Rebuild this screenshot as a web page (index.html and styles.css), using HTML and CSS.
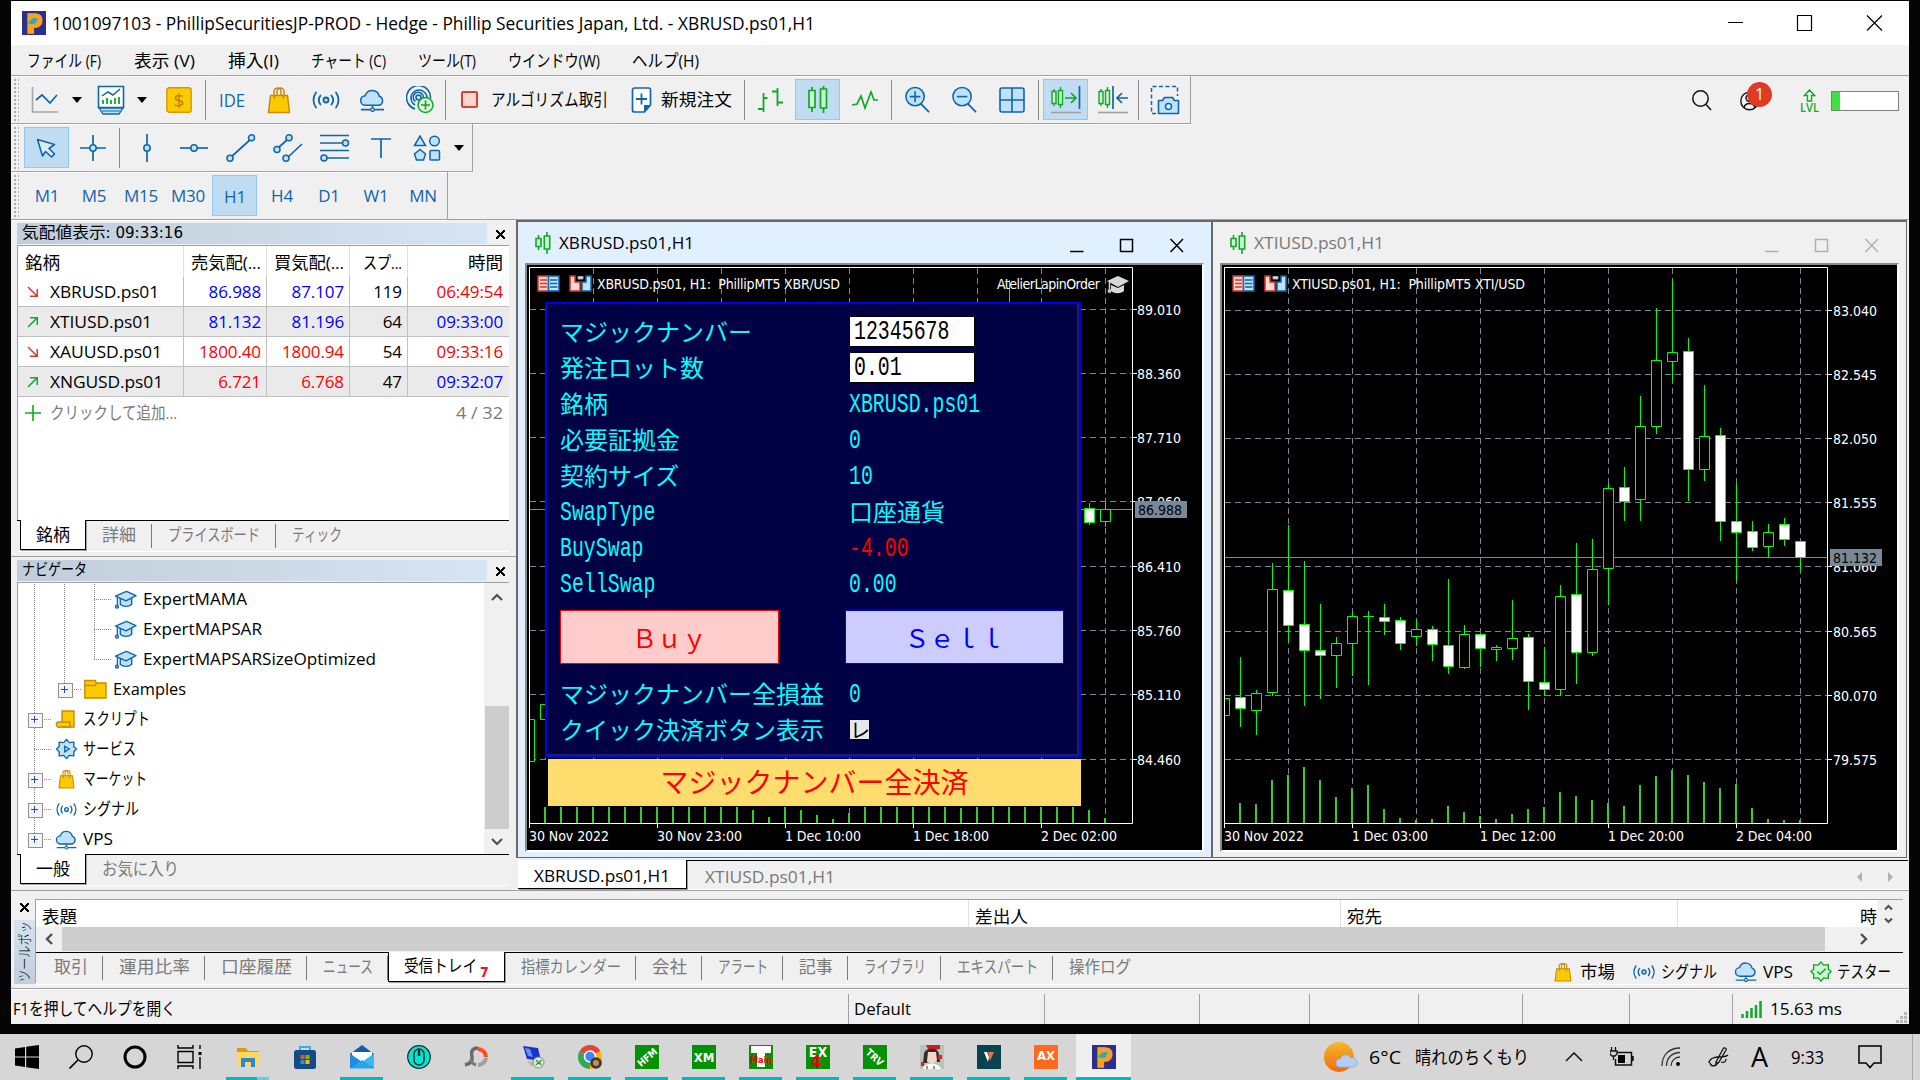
FILE: index.html
```html
<!DOCTYPE html>
<html lang="ja">
<head>
<meta charset="utf-8">
<title>1001097103 - PhillipSecuritiesJP-PROD</title>
<link rel="stylesheet" href="styles.css">
</head>
<body>
<svg class="defs" width="0" height="0" aria-hidden="true">
  <symbol id="bag" viewBox="0 0 24 28"><path d="M7 12V5.500a3.500 3.500 0 0 1 7 0V12M10 12V5.500a3.500 3.500 0 0 1 7 0V12" fill="none" stroke="#c98a00" stroke-width="1.500"/><path d="M3.500 9.500h17l2 17h-21z" fill="#fbcb00" stroke="#c98a00" stroke-width="1.500" stroke-linejoin="round"/><path d="M7.500 9v4M16.500 9v4" stroke="#c98a00" stroke-width="1.500"/></symbol>
  <symbol id="signal" viewBox="0 0 28 20"><g fill="none" stroke="#0f66a8" stroke-width="1.800" stroke-linecap="round"><circle cx="14" cy="10" r="2.500" fill="#bfe3ff"/><path d="M8.500 5.500a7.500 7.500 0 0 0 0 9M19.500 5.500a7.500 7.500 0 0 1 0 9M4 2.500a12.500 12.500 0 0 0 0 15M24 2.500a12.500 12.500 0 0 1 0 15"/></g></symbol>
  <symbol id="cloud" viewBox="0 0 28 24"><path d="M7 17.500a5 5 0 0 1-.5-10A7.500 7.500 0 0 1 21 8a5 5 0 0 1 0 9.500z" fill="#bfe3ff" stroke="#0f66a8" stroke-width="1.600"/><path d="M14 17.500v3M2 22h24" stroke="#0f66a8" stroke-width="1.600"/><circle cx="14" cy="22" r="1.800" fill="#bfe3ff" stroke="#0f66a8" stroke-width="1.200"/></symbol>
  <symbol id="cap" viewBox="0 0 24 20"><g fill="#bfe3ff" stroke="#0f66a8" stroke-width="1.500" stroke-linejoin="round"><path d="M6.500 8v7c3 3 9 3 12 0V8z"/><path d="M1.500 6.500 13 1.500l10 4.500-10.500 5.500z"/><path d="M3.500 7.500v9" fill="none"/><circle cx="3" cy="17.500" r="1.500"/></g></symbol>
  <symbol id="candles" viewBox="0 0 18 22"><path d="M4.500 3v15M13 0v22" stroke="#10a828" stroke-width="1.600"/><path d="M2 6.500h5v8H2zM10.300 4h5.400v13h-5.400z" fill="#cdf5cf" stroke="#10a828" stroke-width="1.600"/></symbol>
  <symbol id="gear" viewBox="0 0 24 24"><path d="M12 1.500 15 5l5-.5L20 9.500 23 12l-3 3v4.500l-5-.5-3 3.500L9 19l-5 .5V15l-3-3 3-2.500v-5L9 5z" stroke-width="1.500" stroke-linejoin="round"/></symbol>
  <symbol id="depth" viewBox="0 0 23 17"><path d="M1 1h10.500v15H1z" fill="#ffd9d4" stroke="#d8322a" stroke-width="1.500"/><path d="M11.500 1H22v15H11.500z" fill="#bfe3ff" stroke="#0f66a8" stroke-width="1.500"/><path d="M3 5h7M3 8.500h7M3 12h7" stroke="#d8322a" stroke-width="1.500"/><path d="M13 5h7.500M13 8.500h7.500M13 12h7.500" stroke="#0f66a8" stroke-width="1.500"/></symbol>
  <symbol id="oneclick" viewBox="0 0 23 17"><path d="M1 1h5v6h5v9H1z" fill="#ffd9d4" stroke="#d8322a" stroke-width="1.500"/><path d="M22 1h-5v6h-4v9h9z" fill="#bfe3ff" stroke="#0f66a8" stroke-width="1.500"/><path d="M9 1.500h5v2.500H9z" fill="#ddd" stroke="#aaa"/></symbol>
  <symbol id="pp" viewBox="0 0 24 24"><path d="M0 0h24v24H0z" fill="#2b2d8f"/><text x="4" y="21.500" font-family="Open Sans" font-weight="800" font-size="26" fill="#f6a31c" stroke="#f6a31c" stroke-width="1.500">P</text><path d="m5.500 12 5-4.500 4-.5 1 1-2 4.500-4 .5z" fill="#2aa7c9"/></symbol>
  <symbol id="lens" viewBox="0 0 28 28"><path d="m17 18 9 9" stroke="#0f66a8" stroke-width="1.800"/><circle cx="11.500" cy="11" r="9.500" fill="#bfe3ff" stroke="#0f66a8" stroke-width="1.600"/></symbol>
</svg>

<div class="window">
  <header class="titlebar">
    <svg class="logo" width="24" height="24"><use href="#pp"/></svg>
    <span data-w="763">1001097103 - PhillipSecuritiesJP-PROD - Hedge - Phillip Securities Japan, Ltd. - XBRUSD.ps01,H1</span>
    <svg class="winbtns" width="160" height="18" viewBox="0 0 160 18"><path d="M1 8.500h15M70.500 1.500h14v15h-14zM140 1.500l15 15M155 1.500l-15 15" fill="none" stroke="#000" stroke-width="1.200"/></svg>
  </header>

  <nav class="menubar">
    <span data-w="74">ファイル (F)</span><span data-w="61">表示 (V)</span><span data-w="51">挿入(I)</span><span data-w="75">チャート (C)</span><span data-w="58">ツール(T)</span><span data-w="92">ウインドウ(W)</span><span data-w="67">ヘルプ(H)</span>
  </nav>

  <div class="toolrow">
    <div class="toolbar main-tools">
      <i class="grip"></i>
      <svg width="28" height="28" viewBox="0 0 28 28"><path d="M1.500 1v25H27" fill="none" stroke="#a6a6a6" stroke-width="1.600"/><path d="m5 14 6-5 8 8 7-8" fill="none" stroke="#0f66a8" stroke-width="1.700"/></svg>
      <i class="drop"></i>
      <svg width="28" height="30" viewBox="0 0 28 30"><path d="M1.500 1.500h25v21h-25z" fill="#fff" stroke="#0f66a8" stroke-width="1.600"/><path d="M2 23h24l-4 6H6z" fill="#bfe3ff" stroke="#0f66a8" stroke-width="1.300"/><path d="M5 26h18" stroke="#0f66a8"/><path d="m5 11 6-4 5 3 7-6" fill="none" stroke="#0f66a8" stroke-width="1.500"/><path d="M6 15v4M10 13v6M14 15v4M18 13v6M22 12v7" stroke="#10a828" stroke-width="1.800"/></svg>
      <i class="drop near"></i>
      <svg width="26" height="26" viewBox="0 0 26 26"><rect x=".8" y=".8" width="24.400" height="24.400" rx="2.500" fill="#fbcb00" stroke="#d39a00" stroke-width="1.400"/><text x="13" y="20" text-anchor="middle" font-family="Open Sans" font-size="19" fill="#bd7b00">$</text></svg>
      <i class="sep"></i>
      <span class="tool-text" data-w="26">IDE</span>
      <svg width="24" height="28"><use href="#bag"/></svg>
      <svg width="28" height="20"><use href="#signal"/></svg>
      <svg width="27" height="24"><use href="#cloud"/></svg>
      <svg width="28" height="28" viewBox="0 0 28 28"><g fill="none" stroke="#0f66a8" stroke-width="1.600"><circle cx="12.500" cy="11.500" r="2.500" fill="#bfe3ff"/><path d="M9 23a12 12 0 1 1 15.500-10.500M9 19a8 8 0 1 1 12-7M9.500 15.500A5 5 0 1 1 17 13"/></g><circle cx="19.500" cy="19" r="7.500" fill="#dcf7dc" stroke="#10a828" stroke-width="1.500"/><path d="M15 19h9M19.500 14.500v9" stroke="#10a828" stroke-width="1.700"/></svg>
      <i class="sep"></i>
      <span class="labelled algo"><i class="stop"></i><span data-w="117">アルゴリズム取引</span></span>
      <span class="labelled"><svg width="21" height="26" viewBox="0 0 21 26"><path d="M3.500 1h14a2 2 0 0 1 2 2v15l-6 7h-10a2 2 0 0 1-2-2V3a2 2 0 0 1 2-2z" fill="#fff" stroke="#0f66a8" stroke-width="1.700"/><path d="M13 25v-7h7z" fill="#0f66a8"/><path d="M5 12h11M10.500 6.500v11" stroke="#0f66a8" stroke-width="1.800"/></svg><span data-w="71">新規注文</span></span>
      <i class="sep"></i>
      <svg width="26" height="26" viewBox="0 0 26 26"><path d="M5.500 6v19M0 22h5M5.500 11h4M19.500 1v18M14 4.500h5M20 15.500h5" stroke="#10a828" stroke-width="1.800" fill="none"/></svg>
      <span class="tbtn on"><svg width="22" height="27" viewBox="0 0 22 27"><path d="M5 1v25M16.500 0v27" stroke="#10a828" stroke-width="1.800"/><path d="M2 4.500h6v17H2zM13.500 3h6v19h-6z" fill="#cdf5cf" stroke="#10a828" stroke-width="1.700"/></svg></span>
      <svg width="26" height="20" viewBox="0 0 26 20"><path d="m0 15 5-1 4-8 4 12 6-16 3 8h4" fill="none" stroke="#10a828" stroke-width="1.700"/></svg>
      <i class="sep"></i>
      <svg width="27" height="27" viewBox="0 0 28 28"><use href="#lens"/><path d="M6 11h11M11.500 5.500v11" stroke="#0f66a8" stroke-width="1.700"/></svg>
      <svg width="27" height="27" viewBox="0 0 28 28"><use href="#lens"/><path d="M6 11h11" stroke="#0f66a8" stroke-width="1.700"/></svg>
      <svg width="26" height="26" viewBox="0 0 26 26"><rect x="1" y="1" width="24" height="24" rx="2" fill="#bfe3ff" stroke="#0f66a8" stroke-width="1.600"/><path d="M1 13h24M13 1v24" stroke="#0f66a8" stroke-width="1.600"/></svg>
      <i class="sep"></i>
      <span class="tbtn on"><svg width="30" height="28" viewBox="0 0 30 28"><path d="M3 3v17M9.500 1v21" stroke="#10a828" stroke-width="1.400"/><path d="M1 5.500h4v12H1zM7.500 4.500h4v14h-4z" fill="#cdf5cf" stroke="#10a828" stroke-width="1.400"/><path d="M14 12h11M20 7l5 5-5 5" fill="none" stroke="#10a828" stroke-width="1.700"/><path d="M28.500 0v23" stroke="#0f66a8" stroke-width="1.700"/><path d="M0 26.500h30" stroke="#a0a0a0" stroke-width="1.600"/></svg></span>
      <svg width="30" height="28" viewBox="0 0 30 28"><path d="M3 3v17M9.500 1v21" stroke="#10a828" stroke-width="1.400"/><path d="M1 5.500h4v12H1zM7.500 4.500h4v14h-4z" fill="#cdf5cf" stroke="#10a828" stroke-width="1.400"/><path d="M15 0v23M30 12H19M24 7l-5 5 5 5" fill="none" stroke="#0f66a8" stroke-width="1.700"/><path d="M0 26.500h30" stroke="#a0a0a0" stroke-width="1.600"/></svg>
      <i class="sep"></i>
      <svg width="30" height="30" viewBox="0 0 30 30"><path d="M6 28.500H1.500v-27h26V11" fill="none" stroke="#0f66a8" stroke-width="1.500" stroke-dasharray="4 2.500"/><path d="M8.500 15.500h4l2-3h8l2 3h4v13h-20z" fill="#bfe3ff" stroke="#0f66a8" stroke-width="1.600" stroke-linejoin="round"/><circle cx="18.500" cy="21.500" r="3" fill="#dff" stroke="#0f66a8" stroke-width="1.500"/></svg>
    </div>
    <div class="account">
      <svg width="20" height="21" viewBox="0 0 20 21"><circle cx="8.500" cy="8.500" r="7.700" fill="none" stroke="#111" stroke-width="1.500"/><path d="m14 14.500 5 5.500" stroke="#111" stroke-width="1.500"/></svg>
      <div class="profile">
        <svg width="19" height="20" viewBox="0 0 19 20"><g fill="none" stroke="#111" stroke-width="1.400"><circle cx="9.500" cy="10" r="8.700"/><circle cx="9.500" cy="7" r="3.500"/><path d="M4 17c1-6 10-6 11 0"/></g></svg>
        <b class="badge">1</b>
      </div>
      <div class="lvl"><svg width="13" height="13" viewBox="0 0 12 13"><path d="M4 12V6.500H1L6 1l5 5.500H8V12z" fill="#fff" stroke="#10a828" stroke-width="1.500"/></svg><span data-w="19">LVL</span></div>
      <div class="meter"></div>
    </div>
  </div>

  <div class="toolrow">
    <div class="toolbar draw-tools">
      <i class="grip"></i>
      <span class="tbtn on"><svg width="20" height="20" viewBox="0 0 20 20"><path d="m1.500 1.500 17 5-5.500 4 5.500 5.500-3 3-6-5.500-3 4.500z" fill="#d8edff" stroke="#0f66a8" stroke-width="1.600" stroke-linejoin="round"/></svg></span>
      <svg width="26" height="26" viewBox="0 0 26 26"><path d="M13 0v26M0 13h26" stroke="#0f66a8" stroke-width="1.700"/><circle cx="13" cy="13" r="3.200" fill="#bfe3ff" stroke="#0f66a8" stroke-width="1.500"/></svg>
      <i class="sep"></i>
      <svg width="26" height="28" viewBox="0 0 26 28"><path d="M13 0v28" stroke="#0f66a8" stroke-width="1.700"/><circle cx="13" cy="14" r="3.200" fill="#bfe3ff" stroke="#0f66a8" stroke-width="1.500"/></svg>
      <svg width="28" height="26" viewBox="0 0 28 26"><path d="M0 13h28" stroke="#0f66a8" stroke-width="1.700"/><circle cx="14" cy="13" r="3.200" fill="#bfe3ff" stroke="#0f66a8" stroke-width="1.500"/></svg>
      <svg width="30" height="28" viewBox="0 0 30 28"><path d="m4 24 22-20" stroke="#0f66a8" stroke-width="1.700"/><g fill="#bfe3ff" stroke="#0f66a8" stroke-width="1.500"><circle cx="4" cy="24.300" r="3"/><circle cx="25.500" cy="3.800" r="3"/></g></svg>
      <svg width="30" height="28" viewBox="0 0 30 28"><path d="M4 15 16 4M13 25l16-15" stroke="#0f66a8" stroke-width="1.700"/><g fill="#bfe3ff" stroke="#0f66a8" stroke-width="1.500"><circle cx="4" cy="15.500" r="3"/><circle cx="16" cy="3.800" r="3"/><circle cx="13" cy="24.300" r="3"/></g></svg>
      <svg width="30" height="28" viewBox="0 0 30 28"><path d="M0 1.500h29M0 9h24M0 16.500h29M5 24h24" stroke="#0f66a8" stroke-width="1.700"/><g fill="#bfe3ff" stroke="#0f66a8" stroke-width="1.500"><circle cx="25.500" cy="9" r="3"/><circle cx="4" cy="24" r="3"/></g></svg>
      <svg width="20" height="20" viewBox="0 0 20 20"><path d="M0 1h20M10 1v19" stroke="#0f66a8" stroke-width="1.700"/></svg>
      <svg width="28" height="26" viewBox="0 0 28 26"><g fill="#bfe3ff" stroke="#0f66a8" stroke-width="1.500"><path d="M1.500 10.500 7 1l5.500 9.500zM7 14.500l5.500 4.500-2 6h-7l-2-6z"/><circle cx="21.500" cy="6" r="4.800"/><rect x="17" y="15.500" width="9.500" height="9.500" rx="1"/></g></svg>
      <i class="drop"></i>
    </div>
  </div>

  <div class="toolrow">
    <div class="toolbar periods">
      <i class="grip"></i>
      <span>M1</span><span>M5</span><span>M15</span><span>M30</span><span class="on">H1</span><span>H4</span><span>D1</span><span>W1</span><span>MN</span>
    </div>
  </div>

  <main class="work">
    <aside class="side">
      <section class="dock">
        <div class="dock-head"><div class="dock-title"><span data-w="161">気配値表示: 09:33:16</span></div><b class="x"></b></div>
        <div class="dock-body watch">
          <div class="wrow whead"><span><em data-w="35">銘柄</em></span><span><em data-w="70">売気配(...</em></span><span><em data-w="70">買気配(...</em></span><span><em data-w="39">スプ...</em></span><span><em data-w="35">時間</em></span></div>
          <div class="wrow"><span><svg width="12" height="12" viewBox="0 0 12 12"><path d="m1 1 9 9M3 10.300h7.300V3" fill="none" stroke="#d04030" stroke-width="1.500"/></svg><em data-w="109">XBRUSD.ps01</em></span><span class="blue">86.988</span><span class="blue">87.107</span><span>119</span><span class="red">06:49:54</span></div>
          <div class="wrow alt"><span><svg width="12" height="12" viewBox="0 0 12 12"><path d="m1 11 9-9M3 1.700h7.300V9" fill="none" stroke="#10a828" stroke-width="1.500"/></svg><em data-w="102">XTIUSD.ps01</em></span><span class="blue">81.132</span><span class="blue">81.196</span><span>64</span><span class="blue">09:33:00</span></div>
          <div class="wrow"><span><svg width="12" height="12" viewBox="0 0 12 12"><path d="m1 1 9 9M3 10.300h7.300V3" fill="none" stroke="#d04030" stroke-width="1.500"/></svg><em data-w="112">XAUUSD.ps01</em></span><span class="red">1800.40</span><span class="red">1800.94</span><span>54</span><span class="red">09:33:16</span></div>
          <div class="wrow alt"><span><svg width="12" height="12" viewBox="0 0 12 12"><path d="m1 11 9-9M3 1.700h7.300V9" fill="none" stroke="#10a828" stroke-width="1.500"/></svg><em data-w="113">XNGUSD.ps01</em></span><span class="red">6.721</span><span class="red">6.768</span><span>47</span><span class="blue">09:32:07</span></div>
          <div class="wadd"><svg width="16" height="16" viewBox="0 0 16 16"><path d="M0 8h16M8 0v16" stroke="#10a828" stroke-width="1.600"/></svg><em data-w="127">クリックして追加...</em><b data-w="47">4 / 32</b></div>
        </div>
        <div class="tabs">
          <span class="active"><em data-w="34">銘柄</em></span><span><em data-w="34">詳細</em></span><span><em data-w="92">プライスボード</em></span><span><em data-w="50">ティック</em></span>
        </div>
      </section>

      <section class="dock nav">
        <div class="dock-head"><div class="dock-title"><span data-w="65">ナビゲータ</span></div><b class="x"></b></div>
        <div class="dock-body navbody">
          <div class="tree">
            <div class="node n3"><i></i><i></i><i class="tee"></i><svg width="23" height="19"><use href="#cap"/></svg><em data-w="104">ExpertMAMA</em></div>
            <div class="node n3"><i></i><i></i><i class="tee"></i><svg width="23" height="19"><use href="#cap"/></svg><em data-w="119">ExpertMAPSAR</em></div>
            <div class="node n3"><i></i><i></i><i class="tee last"></i><svg width="23" height="19"><use href="#cap"/></svg><em data-w="233">ExpertMAPSARSizeOptimized</em></div>
            <div class="node n2"><i></i><i class="tee last plus"></i><svg width="23" height="20" viewBox="0 0 23 20"><path d="M.8 19V1.500h10.500l1 2.500H22v15z" fill="#fbcb00" stroke="#c98a00" stroke-width="1.400"/><path d="M1 6.500h10l1.500-2.500" fill="none" stroke="#c98a00" stroke-width="1.400"/></svg><em data-w="73">Examples</em></div>
            <div class="node n1"><i class="tee plus"></i><svg width="23" height="18" viewBox="0 0 23 18"><path d="M7 1h12v16H7z" fill="#fbcb00" stroke="#c98a00" stroke-width="1.400"/><path d="M3 12h12v5H5a2.500 2.500 0 0 1-2-5z" fill="#fbcb00" stroke="#c98a00" stroke-width="1.400"/></svg><em data-w="67">スクリプト</em></div>
            <div class="node n1"><i class="tee"></i><svg class="gear-blue" width="22" height="22" viewBox="0 0 24 24"><use href="#gear"/><path d="m10 9 5 3-5 3z" stroke-width="1.500"/></svg><em data-w="53">サービス</em></div>
            <div class="node n1"><i class="tee plus"></i><svg width="23" height="20" viewBox="0 0 24 28"><use href="#bag"/></svg><em data-w="64">マーケット</em></div>
            <div class="node n1"><i class="tee plus"></i><svg width="23" height="15"><use href="#signal"/></svg><em data-w="56">シグナル</em></div>
            <div class="node n1"><i class="tee plus last"></i><svg width="24" height="21"><use href="#cloud"/></svg><em data-w="30">VPS</em></div>
          </div>
          <div class="vscroll"><svg width="12" height="8" viewBox="0 0 12 8"><path d="m1 7 5-5 5 5" fill="none" stroke="#505050" stroke-width="2.200"/></svg><div class="thumb"></div><svg width="12" height="8" viewBox="0 0 12 8"><path d="m1 1 5 5 5-5" fill="none" stroke="#505050" stroke-width="2.200"/></svg></div>
        </div>
        <div class="tabs">
          <span class="active"><em data-w="34">一般</em></span><span><em data-w="77">お気に入り</em></span>
        </div>
      </section>
    </aside>

    <div class="mdi">
      <div class="mdi-windows">
        <section class="chartwin focus">
          <header><svg width="18" height="22"><use href="#candles"/></svg><em data-w="135">XBRUSD.ps01,H1</em>
            <svg class="mbtns" width="114" height="15" viewBox="0 0 114 15"><path d="M0 13.500h13.500M50.500 1.500h12v12h-12zM100.500 1l12.500 13M113 1l-12.500 13" fill="none" stroke="currentColor" stroke-width="1.500"/></svg>
          </header>
          <div class="canvas">
            <svg width="675" height="585" viewBox="527 265 675 585">
              <path class="grid" d="M593.500 268V823M657.500 268V823M721.500 268V823M785.500 268V823M849.500 268V823M913.500 268V823M977.500 268V823M1041.500 268V823M1105.500 268V823M530 309.500H1132M530 373.500H1132M530 437.500H1132M530 501.500H1132M530 566.500H1132M530 630.500H1132M530 694.500H1132M530 759.500H1132"/>
              <path class="quote" d="M530 509.500H1132"/>
              <path class="bar" d="M545 807V823M561 807V823M577 807V823M593 807V823M609 807V823M625 807V823M641 807V823M657 807V823M673 807V823M689 807V823M705 807V823M721 807V823M737 807V823M753 810V823M769 817V823M785 807V823M801 810V823M817 815V823M833 819V823M849 813V823M865 807V823M881 807V823M897 807V823M913 807V823M929 807V823M945 807V823M961 808V823M977 807V823M993 807V823M1009 807V823M1025 807V823M1041 807V823M1057 807V823M1073 807V823M1089 810V823M1105 818V823"/>
              <path class="wick" d="M545.500 688V759M1009.500 280V310M1089.500 503V525M1105.500 502V527"/>
              <path class="up" d="M530 719.500h4.500v42H530M540.500 704.500h10v15h-10zM1100.500 509.500h10v12h-10z"/>
              <path class="down" d="M1084.500 508.500h10v14h-10z"/>
              <path class="frame" d="M529.500 828V267.500H1132.500V823.500H529.500M657.500 823v5M785.500 823v5M913.500 823v5M1041.500 823v5M1132 309.500h5M1132 373.500h5M1132 437.500h5M1132 501.500h5M1132 566.500h5M1132 630.500h5M1132 694.500h5M1132 759.500h5"/>
              <g class="axis">
                <text x="1137" y="315" textLength="44">89.010</text><text x="1137" y="379" textLength="44">88.360</text><text x="1137" y="443" textLength="44">87.710</text><text x="1137" y="507" textLength="44">87.060</text><text x="1137" y="572" textLength="44">86.410</text><text x="1137" y="636" textLength="44">85.760</text><text x="1137" y="700" textLength="44">85.110</text><text x="1137" y="765" textLength="44">84.460</text>
                <text x="529" y="841" textLength="80">30 Nov 2022</text><text x="657" y="841" textLength="85">30 Nov 23:00</text><text x="785" y="841" textLength="76">1 Dec 10:00</text><text x="913" y="841" textLength="76">1 Dec 18:00</text><text x="1041" y="841" textLength="76">2 Dec 02:00</text>
                <text x="597" y="289" textLength="243" xml:space="preserve">XBRUSD.ps01, H1:  PhillipMT5 XBR/USD</text><text x="997" y="289" textLength="103">AtelierLapinOrder</text>
              </g>
              <path class="tag" d="M1135 501h52v17h-52z"/><text class="tagtext" x="1138" y="515" textLength="44">86.988</text>
              <use href="#depth" x="537" y="275" width="23" height="17"/><use href="#oneclick" x="569" y="275" width="23" height="17"/>
              <path d="m1107 281 11-5 11 5-11 6zM1111 285v6c4 3 9 3 13 0v-6l-6 3z" fill="#d8d8d8"/><path d="M1109.500 282v7" stroke="#d8d8d8" stroke-width="1.500"/><circle cx="1109.500" cy="291" r="2" fill="#c8c8c8"/>
            </svg>
            <div class="order">
              <div class="order-box">
                <div class="orow"><em>マジックナンバー</em><span class="field"><u>12345678</u></span></div>
                <div class="orow"><em>発注ロット数</em><span class="field"><u>0.01</u></span></div>
                <div class="orow"><em>銘柄</em><span><u>XBRUSD.ps01</u></span></div>
                <div class="orow"><em>必要証拠金</em><span><u>0</u></span></div>
                <div class="orow"><em>契約サイズ</em><span><u>10</u></span></div>
                <div class="orow"><em><u>SwapType</u></em><span>口座通貨</span></div>
                <div class="orow"><em><u>BuySwap</u></em><span class="red"><u>-4.00</u></span></div>
                <div class="orow"><em><u>SellSwap</u></em><span><u>0.00</u></span></div>
                <div class="deal"><button class="buy">Ｂｕｙ</button><button class="sell">Ｓｅｌｌ</button></div>
                <div class="orow"><em>マジックナンバー全損益</em><span><u>0</u></span></div>
                <div class="orow"><em>クイック決済ボタン表示</em><span class="check">レ</span></div>
              </div>
              <div class="close-all">マジックナンバー全決済</div>
            </div>
          </div>
        </section>
        <section class="chartwin">
          <header><svg width="18" height="22"><use href="#candles"/></svg><em data-w="130">XTIUSD.ps01,H1</em>
            <svg class="mbtns" width="114" height="15" viewBox="0 0 114 15"><path d="M0 13.500h13.500M50.500 1.500h12v12h-12zM100.500 1l12.500 13M113 1l-12.500 13" fill="none" stroke="currentColor" stroke-width="1.500"/></svg>
          </header>
          <div class="canvas">
            <svg width="675" height="585" viewBox="1222 265 675 585">
              <path class="grid" d="M1288.500 268V823M1352.500 268V823M1416.500 268V823M1480.500 268V823M1544.500 268V823M1608.500 268V823M1672.500 268V823M1736.500 268V823M1800.500 268V823M1225 310.500H1827M1225 374.500H1827M1225 438.500H1827M1225 502.500H1827M1225 566.500H1827M1225 631.500H1827M1225 695.500H1827M1225 759.500H1827"/>
              <path class="quote" d="M1225 557.500H1827"/>
              <path class="bar" d="M1240 803V823M1256 804V823M1272 780V823M1288 775V823M1304 767V823M1320 780V823M1336 797V823M1352 788V823M1368 785V823M1384 809V823M1400 818V823M1416 820V823M1432 819V823M1448 806V823M1464 812V823M1480 816V823M1496 819V823M1512 814V823M1528 809V823M1544 807V823M1560 792V823M1576 796V823M1592 800V823M1608 803V823M1624 806V823M1640 785V823M1656 776V823M1672 770V823M1688 775V823M1704 782V823M1720 788V823M1736 784V823M1752 808V823M1768 819V823M1784 820V823M1800 820V823"/>
              <path class="wick" d="M1240.500 657V727M1256.500 690V694M1256.500 711V735M1272.500 563V589M1272.500 693V696M1288.500 525V642M1304.500 561V706M1320.500 604V699M1336.500 637V643M1336.500 656V688M1352.500 611V616M1352.500 644V676M1368.500 611V685M1363 616.500h11M1384.500 604V635M1400.500 617V650M1416.500 620V629M1416.500 637V646M1432.500 626V661M1448.500 579V674M1464.500 625V634M1464.500 668V669M1480.500 633V667M1496.500 645V647M1496.500 650V661M1512.500 600V638M1512.500 649V660M1528.500 634V710M1544.500 647V696M1560.500 585V596M1560.500 690V696M1576.500 543V684M1592.500 539V569M1592.500 653V656M1608.500 484V488M1608.500 569V605M1624.500 467V521M1640.500 396V426M1640.500 500V521M1656.500 308V360M1656.500 427V434M1672.500 279V352M1672.500 362V382M1688.500 338V501M1704.500 385V436M1704.500 470V481M1720.500 428V541M1736.500 483V582M1752.500 521V551M1768.500 524V532M1768.500 547V557M1784.500 518V546M1800.500 541V571"/>
              <path class="up" d="M1225 698.500h4.500v17H1225M1251.500 693.500h10v17h-10zM1267.500 589.500h10v103h-10zM1331.500 643.500h10v12h-10zM1347.500 616.500h10v27h-10zM1411.500 629.500h10v7h-10zM1459.500 634.500h10v33h-10zM1491.500 647.500h10v2h-10zM1507.500 638.500h10v10h-10zM1555.500 596.500h10v93h-10zM1587.500 569.500h10v83h-10zM1603.500 488.500h10v80h-10zM1635.500 426.500h10v73h-10zM1651.500 360.500h10v66h-10zM1667.500 352.500h10v9h-10zM1699.500 436.500h10v33h-10zM1763.500 532.500h10v14h-10z"/>
              <path class="down" d="M1235.500 697.500h10v11h-10zM1283.500 590.500h10v35h-10zM1299.500 624.500h10v26h-10zM1315.500 650.500h10v5h-10zM1379.500 617.500h10v4h-10zM1395.500 620.500h10v23h-10zM1427.500 629.500h10v15h-10zM1443.500 645.500h10v21h-10zM1475.500 634.500h10v14h-10zM1523.500 637.500h10v44h-10zM1539.500 682.500h10v7h-10zM1571.500 594.500h10v58h-10zM1619.500 487.500h10v14h-10zM1683.500 351.500h10v118h-10zM1715.500 435.500h10v86h-10zM1731.500 521.500h10v11h-10zM1747.500 531.500h10v16h-10zM1779.500 524.500h10v15h-10zM1795.500 541.500h10v16h-10z"/>
              <path class="frame" d="M1224.500 828V267.500H1827.500V823.500H1224.500M1352.500 823v5M1480.500 823v5M1608.500 823v5M1736.500 823v5M1827 310.500h5M1827 374.500h5M1827 438.500h5M1827 502.500h5M1827 566.500h5M1827 631.500h5M1827 695.500h5M1827 759.500h5"/>
              <g class="axis">
                <text x="1833" y="316" textLength="44">83.040</text><text x="1833" y="380" textLength="44">82.545</text><text x="1833" y="444" textLength="44">82.050</text><text x="1833" y="508" textLength="44">81.555</text><text x="1833" y="572" textLength="44">81.060</text><text x="1833" y="637" textLength="44">80.565</text><text x="1833" y="701" textLength="44">80.070</text><text x="1833" y="765" textLength="44">79.575</text>
                <text x="1224" y="841" textLength="80">30 Nov 2022</text><text x="1352" y="841" textLength="76">1 Dec 03:00</text><text x="1480" y="841" textLength="76">1 Dec 12:00</text><text x="1608" y="841" textLength="76">1 Dec 20:00</text><text x="1736" y="841" textLength="76">2 Dec 04:00</text>
                <text x="1292" y="289" textLength="233" xml:space="preserve">XTIUSD.ps01, H1:  PhillipMT5 XTI/USD</text>
              </g>
              <path class="tag" d="M1830 549h52v17h-52z"/><text class="tagtext" x="1833" y="563" textLength="44">81.132</text>
              <use href="#depth" x="1232" y="275" width="23" height="17"/><use href="#oneclick" x="1264" y="275" width="23" height="17"/>
            </svg>
          </div>
        </section>
      </div>
      <div class="mdi-tabs">
        <span class="active"><em data-w="136">XBRUSD.ps01,H1</em></span><span class="rest"><em data-w="130">XTIUSD.ps01,H1</em><svg width="36" height="12" viewBox="0 0 36 12"><path d="M5 1v10L0 6zM31 1v10l5-5z" fill="#b0b0b0"/></svg></span>
      </div>
    </div>
  </main>

  <section class="toolbox">
    <div class="toolbox-side"><b class="x"></b><svg width="21" height="64" viewBox="0 0 21 64"><defs><linearGradient id="side" x1="0" y1="1" x2="0" y2="0"><stop offset="0" stop-color="#c0cddb"/><stop offset="1" stop-color="#d6e4f2"/></linearGradient></defs><path d="M0 0h21v64H0z" fill="url(#side)"/><text transform="translate(16 62) rotate(-90) scale(.84 1)" font-size="14.500" font-weight="300">ツールボッ</text></svg></div>
    <div class="toolbox-main">
      <div class="mail-head"><span><em data-w="35">表題</em></span><span><em data-w="53">差出人</em></span><span><em data-w="35">宛先</em></span><span class="time"><em data-w="17">時</em></span><svg width="26" height="27" viewBox="0 0 26 27"><path d="M0 0h26v27H0z" fill="#f0f0f0"/><path d="m8 9.500 3.500-3.500L15 9.500M8 18.500l3.500 3.500 3.500-3.500" fill="none" stroke="#505050" stroke-width="2"/></svg></div>
      <div class="hscroll"><svg width="26" height="14" viewBox="0 0 26 14"><path d="m16 2-5 5 5 5" fill="none" stroke="#505050" stroke-width="2.400"/></svg><div class="hthumb"></div><svg width="78" height="14" viewBox="0 0 78 14"><path d="m36 2 5 5-5 5" fill="none" stroke="#505050" stroke-width="2.400"/></svg></div>
      <div class="tabs wide">
        <span><em data-w="34">取引</em></span><span><em data-w="71">運用比率</em></span><span><em data-w="71">口座履歴</em></span><span><em data-w="50">ニュース</em></span><span class="active"><em data-w="73">受信トレイ</em><b>7</b></span><span><em data-w="100">指標カレンダー</em></span><span><em data-w="35">会社</em></span><span><em data-w="50">アラート</em></span><span><em data-w="34">記事</em></span><span><em data-w="62">ライブラリ</em></span><span><em data-w="81">エキスパート</em></span><span><em data-w="62">操作ログ</em></span>
        <div class="links">
          <svg width="18" height="20" viewBox="0 0 24 28" preserveAspectRatio="none"><use href="#bag"/></svg><em data-w="35">市場</em>
          <svg width="24" height="16"><use href="#signal"/></svg><em data-w="56">シグナル</em>
          <svg width="24" height="21"><use href="#cloud"/></svg><em data-w="30">VPS</em>
          <svg class="gear-green" width="22" height="23" viewBox="0 0 24 24"><use href="#gear"/><path d="m8 12 3 3 6-6" stroke-width="1.600"/></svg><em data-w="54">テスター</em>
        </div>
      </div>
    </div>
  </section>

  <footer class="status">
    <span><em data-w="163">F1を押してヘルプを開く</em></span><span><em data-w="57">Default</em></span><span></span><span></span><span></span><span></span><span></span><span></span>
    <span><svg width="22" height="17" viewBox="0 0 22 17"><path d="M1.500 13v4M6 10v7M10.500 7v10M15 4v13M19.500 0v17" stroke="#10a828" stroke-width="2.500"/></svg><em data-w="72">15.63 ms</em><svg class="gripper" width="12" height="12" viewBox="0 0 12 12"><path d="M8 0h3v3H8zM4 4h3v3H4zM8 4h3v3H8zM0 8h3v3H0zM4 8h3v3H4zM8 8h3v3H8z" fill="#b8b8b8"/></svg></span>
  </footer>
</div>

<div class="taskbar">
  <div class="apps">
    <span class="sys"><svg width="24" height="24" viewBox="0 0 24 24"><path d="M0 3.500 10 2v9.500H0zM11.200 1.800 24 0v11.500H11.200zM0 12.500h10V22L0 20.500zM11.200 12.500H24V24l-12.800-1.800z"/></svg></span>
    <span class="sys"><svg width="24" height="24" viewBox="0 0 24 24"><circle cx="15" cy="9" r="8.200" fill="none" stroke="#000" stroke-width="1.400"/><path d="M9 15 .5 23.500" stroke="#000" stroke-width="1.600"/></svg></span>
    <span class="sys"><svg width="24" height="24" viewBox="0 0 24 24"><circle cx="12" cy="12" r="10" fill="none" stroke="#000" stroke-width="3"/></svg></span>
    <span class="sys view"><svg width="25" height="24" viewBox="0 0 25 24"><path d="M1 0v3h15V0M1 24v-3h15v3M1 6.500h15v11H1zM23 0v4M23 12v12" fill="none" stroke="#000" stroke-width="1.400"/><path d="M21.500 7h3v3h-3z"/></svg></span>
    <span class="run split"><svg width="24" height="24" viewBox="0 0 24 24"><path d="M1 3h9l2 3h11v14H1z" fill="#d99a12"/><path d="M1 7h22v14H1z" fill="#ffd75e"/><path d="M5 22v-9h14v9h-4v-5H9v5z" fill="#2a87d0"/></svg></span>
    <span><svg width="24" height="24" viewBox="0 0 24 24"><path d="M7 6V2h10v4" fill="none" stroke="#2cb4f0" stroke-width="2"/><rect x="1" y="5" width="22" height="19" rx="2.500" fill="#164a80"/><path d="M7.500 10h4v4h-4z" fill="#f25022"/><path d="M12.500 10h4v4h-4z" fill="#7fba00"/><path d="M7.500 15h4v4h-4z" fill="#00a4ef"/><path d="M12.500 15h4v4h-4z" fill="#ffb900"/></svg></span>
    <span class="run"><svg width="24" height="24" viewBox="0 0 24 24"><path d="M0 9 12 0l12 9v14H0z" fill="#0f5ea8"/><path d="M2 7h20v10H2z" fill="#fff"/><path d="M0 8.500 12 17 0 23z" fill="#1c8fe0"/><path d="m24 8.500-12 8.500 12 6z" fill="#38b8f4"/><path d="M0 23.500 12 15l12 8.500z" fill="#2aa4ee"/></svg></span>
    <span><svg width="24" height="24" viewBox="0 0 24 24"><circle cx="12" cy="12" r="11.300" fill="#00e6d0" stroke="#10302e" stroke-width="1.200"/><rect x="7" y="4" width="10" height="16" rx="5" fill="#00e6d0" stroke="#10302e" stroke-width="1.500"/><path d="M12 4v7" stroke="#10302e" stroke-width="2.500"/></svg></span>
    <span><svg width="24" height="24" viewBox="0 0 24 24"><g fill="none" stroke-width="4"><path d="M14 4a8 8 0 0 1 8 8" stroke="#ff4a1c"/><path d="M22 13a8 8 0 0 1-8 7" stroke="#a0a0a0"/><path d="M14 3c-7 0-7 5-6 9 1 5-3 7-7 8" stroke="#6a6a6a" stroke-width="3.500"/><path d="M12 20c-3-1-5-3-5-6" stroke="#7a7a7a" stroke-width="3"/></g></svg></span>
    <span class="run"><svg width="24" height="24" viewBox="0 0 24 24"><path d="m2 1 15 2 3 13-14-2z" fill="#1733c8"/><path d="m4 3 5 1 3 8-5-1z" fill="#6b8df5"/><path d="m6 16 11 1 2 3-9 1z" fill="#b8b8b8"/><circle cx="17.500" cy="17.500" r="5.500" fill="#dfe8df" stroke="#888"/><path d="m15 15 2.500 2.500L15 20M20.500 15 18 17.500l2.500 2.500" stroke="#2e9b2e" fill="none" stroke-width="1.300"/></svg></span>
    <span class="run"><svg width="24" height="24" viewBox="0 0 24 24"><path d="M12 12 1.600 6A12 12 0 0 1 22.400 6z" fill="#ea4335"/><path d="M12 12 22.400 6A12 12 0 0 1 12 24z" fill="#fbbc05"/><path d="M12 12v12A12 12 0 0 1 1.600 6z" fill="#34a853"/><circle cx="12" cy="11.500" r="5.500" fill="#4285f4" stroke="#fff" stroke-width="1.500"/><circle cx="18" cy="18" r="5.800" fill="#4a3424"/><circle cx="18" cy="18" r="3" fill="#b9936a"/></svg></span>
    <span class="run"><svg width="24" height="24" viewBox="0 0 24 24"><path d="M0 0h24v24H0z" fill="#049104"/><text class="ic" x="12" y="16" font-size="10" transform="rotate(-40 12 12)">HFM</text></svg></span>
    <span class="run"><svg width="24" height="24" viewBox="0 0 24 24"><path d="M0 0h24v24H0z" fill="#049104"/><text class="ic" x="12" y="17" font-size="13">XM</text></svg></span>
    <span class="run"><svg width="24" height="24" viewBox="0 0 24 24"><path d="M0 0h24v24H0z" fill="#049104"/><path d="M2 1h20v7h-6v14H8V8H2z" fill="#fff"/><text class="ic hot" x="12" y="17.500" font-size="9">Main</text></svg></span>
    <span class="run"><svg width="24" height="24" viewBox="0 0 24 24"><path d="M0 0h24v24H0z" fill="#049104"/><text class="ic" x="12" y="11.500" font-size="14">EX</text><text class="ic hot" x="10" y="22.500" font-size="17">4</text></svg></span>
    <span class="run"><svg width="24" height="24" viewBox="0 0 24 24"><path d="M0 0h24v24H0z" fill="#049104"/><text class="ic" x="12" y="16" font-size="10" transform="rotate(42 12 12)">TRV</text></svg></span>
    <span class="run"><svg width="24" height="24" viewBox="0 0 24 24"><path d="M0 0h24v24H0z" fill="#b8c4b8"/><path d="M6 0h14v4L9 6z" fill="#c8201c"/><path d="M4 9c1-7 14-7 15 0l1 8h-3l-2-8-6 0-2 9H3z" fill="#3a2a2a"/><path d="M8 7h8l1 8-4 4-6-3z" fill="#f2d6c8"/><path d="M3 24c1-7 16-7 18 0z" fill="#fff"/><path d="M18 10h4v4h-4zM1 17h3v4H1z" fill="#d02828"/><path d="M7 21v3M14 21v3" stroke="#222"/></svg></span>
    <span class="run"><svg width="24" height="24" viewBox="0 0 24 24"><path d="M0 0h24v24H0z" fill="#06444f"/><path d="m7 7 3 0 2 5-1 5z" fill="#fff"/><path d="M11 7h6l-4 9-1-4z" fill="#e87434"/></svg></span>
    <span class="run"><svg width="24" height="24" viewBox="0 0 24 24"><path d="M0 0h24v24H0z" fill="#ff6a1e"/><text class="ic" x="12" y="15" font-size="13">AX</text></svg></span>
    <span class="run current"><svg width="24" height="24"><use href="#pp"/></svg></span>
  </div>
  <div class="tray">
    <svg width="34" height="31" viewBox="0 0 34 31"><defs><linearGradient id="sun" x1="0" y1="0" x2="0" y2="1"><stop offset="0" stop-color="#f2b92e"/><stop offset="1" stop-color="#f26a0c"/></linearGradient></defs><circle cx="15" cy="15" r="15" fill="url(#sun)"/><path d="M16 25a4 4 0 0 1 0-8 6 6 0 0 1 11-1 4.500 4.500 0 0 1 3 9z" fill="#b6cdf4" stroke="#8fb0ea"/></svg>
    <em data-w="32">6°C</em><em data-w="114">晴れのちくもり</em>
    <svg width="18" height="10" viewBox="0 0 18 10"><path d="m1 9 8-8 8 8" fill="none" stroke="#111" stroke-width="1.500"/></svg>
    <svg width="24" height="20" viewBox="0 0 24 20"><path d="M7 5.500h14.500V18H5.500v-6M23 9v5" fill="none" stroke="#111" stroke-width="1.500"/><path d="M8 8h7v8H8z"/><path d="M1.500 0v4M5.500 0v4M0 4h7v3L5 9H2L0 7zM3.500 9v4" stroke="#111" fill="none" stroke-width="1.300"/></svg>
    <svg width="20" height="20" viewBox="0 0 20 20"><path d="M1 19C1 8 8 1 19 1M5.500 19C5.500 11 11 5.500 19 5.500M10 19c0-5 4-9 9-9" fill="none" stroke="#333" stroke-width="1.300"/><circle cx="17" cy="17" r="2"/></svg>
    <svg width="21" height="21" viewBox="0 0 21 21"><path d="M8 15 15 2c1-2 4-1 3 1l-7 12-3 3zM1 16c0-4 5-6 9-6s8 0 10-2M2 16c1 4 6 4 7-1M13 15c3 1 5 0 5-3" fill="none" stroke="#111" stroke-width="1.300"/></svg>
    <em class="ime">A</em><em data-w="33">9:33</em>
    <svg class="notes" width="24" height="24" viewBox="0 0 24 24"><path d="M1 1h22v17h-7l-4 4.500L8 18H1z" fill="none" stroke="#000" stroke-width="1.500"/></svg>
    <i class="peek"></i>
  </div>
</div>
<script src="fit.js"></script>
</body>
</html>
```
FILE: styles.css
```css
* { box-sizing: border-box; }
html, body { margin: 0; height: 1080px; overflow: hidden; }
body {
  width: 1920px; background: #050505; color: #000;
  font: 17px/24px "Open Sans", "Noto Sans CJK JP", sans-serif;
  display: flex; flex-direction: column;
}
em, i, u { font-style: normal; text-decoration: none; }
[data-w] { display: inline-block; white-space: pre; transform-origin: left center; }
svg { display: block; flex: none; }
.defs { position: absolute; }
.red { color: #f00; }
.blue { color: #00f; }

.window {
  width: 1898px; height: 1023px; margin: 1px 0 10px 11px; flex: none;
  background: #f0f0f0; display: flex; flex-direction: column;
}
.titlebar { height: 44px; background: #fff; display: flex; align-items: center; padding: 0 27px 0 11px; flex: none; font-size: 18px; }
.titlebar .logo { margin-right: 6px; }
.winbtns { margin-left: auto; margin-right: -5px; }
.menubar { height: 31px; flex: none; display: flex; gap: 33px; align-items: center; padding: 1px 0 0 16px; border-bottom: 1px solid #a0a0a0; }
.menubar span:nth-child(n+4) { margin-left: -1px; }

.toolrow { height: 48px; flex: none; display: flex; justify-content: space-between; }
.toolbar {
  display: grid; align-items: center; justify-items: center; height: 48px;
  border-bottom: 1px solid #a0a0a0; border-right: 1px solid #a0a0a0;
  box-shadow: inset 0 1px #fff, 0 1px #fff;
}
.grip { width: 6px; height: 44px; justify-self: start; margin-left: 2px; background: radial-gradient(circle, #b0b0b0 1px, transparent 1.3px) 0 0 / 4px 4px; }
.sep { width: 1px; height: 40px; background: #8c8c8c; }
.drop { border: 5.500px solid transparent; border-top: 6px solid #000; border-bottom: 0; }
.near { justify-self: start; }
.tbtn { width: 45px; height: 41px; display: flex; align-items: center; justify-content: center; }
.on { background: #c0dcf3; border: 1px solid #90c8f6; }
.main-tools {
  width: 1180px;
  grid-template-columns: 11px 46px 17px 52px 19px 46px 6px 47px 47px 47px 47px 47px 5px 174px 120px 5px 47px 47px 47px 6px 47px 47px 47px 7px 47px 47px 5px 47px;
}
.tool-text { color: #0f66a8; font-size: 18px; }
.labelled { display: flex; align-items: center; justify-self: start; gap: 9px; padding-left: 9px; }
.algo { gap: 13px; padding-left: 13px; }
.stop { width: 17px; height: 17px; border: 2px solid #d8403a; border-radius: 2px; background: #ffd5cc; }
.draw-tools { width: 462px; grid-template-columns: 11px 48px 45px 8px 47px 47px 47px 47px 47px 46px 46px 18px; }
.periods { width: 437px; grid-template-columns: 12px repeat(9, 47px); color: #0f66a8; }
.periods span { width: 45px; height: 41px; line-height: 42px; text-align: center; letter-spacing: -.2px; padding-left: 1px; }
.periods .on { line-height: 41px; }

.account { display: flex; align-items: center; padding: 1px 10px 0 0; height: 48px; }
.profile { position: relative; margin: 0 41px 0 28px; }
.badge { position: absolute; left: 7px; top: -9px; width: 25px; height: 25px; border-radius: 50%; background: #e23a22; color: #fff; font-size: 16px; font-weight: 400; line-height: 25px; text-align: center; }
.lvl { display: flex; flex-direction: column; align-items: center; color: #10a828; font-size: 12px; line-height: 11px; font-weight: 600; margin-right: 12px; width: 19px; }
.meter { width: 68px; height: 20px; border: 1px solid #808080; background: linear-gradient(90deg, #40e040 8px, #fff 8px); }

.work { height: 671px; flex: none; display: flex; border-top: 1px solid #a0a0a0; margin-top: -1px; }
.side { width: 505px; flex: none; }
.dock { height: 337px; padding: 3px 7px 0 6px; border-bottom: 1px solid #a0a0a0; }
.nav { height: 334px; }
.dock-head { height: 21px; display: flex; align-items: center; justify-content: space-between; padding-right: 4px; }
.dock-title { width: 470px; height: 21px; background: linear-gradient(90deg, #c0cddb, #d6e5f3); font: 16px/19px "DejaVu Sans Condensed", "Noto Sans CJK JP", sans-serif; padding-left: 5px; }
.dock-head .x { margin-top: 1px; }
.x { width: 9px; height: 9px; background: linear-gradient(45deg, transparent 40%, #000 40% 60%, transparent 60%), linear-gradient(-45deg, transparent 40%, #000 40% 60%, transparent 60%); }
.dock-body { margin-top: 1px; height: 275px; background: #fff; border: solid #a0a0a0; border-width: 1px 0 0 1px; }
.wrow { height: 30px; display: grid; grid-template-columns: 166px 83px 83px 58px 1fr; border-bottom: 1px solid #c0c0c0; }
.wrow > span { border-right: 1px solid #c0c0c0; display: flex; align-items: center; justify-content: flex-end; padding: 1px 5px 0 0; letter-spacing: -.1px; }
.wrow > span:first-child { justify-content: flex-start; padding-left: 9px; gap: 11px; }
.wrow > span:last-child { border-right: 0; padding-right: 6px; }
.whead { height: 31px; border-bottom: 0; }
.whead > span { border-color: #e0e0e0; padding-top: 2px; }
.whead > span:first-child { padding-left: 7px; }
.alt { background: #eaeaea; }
.wadd { height: 32px; display: flex; align-items: center; gap: 9px; padding: 0 6px 0 7px; color: #7a7a7a; }
.wadd b { margin-left: auto; font-weight: 400; }

.tabs { display: flex; border-top: 1px solid #000; height: 31px; padding-left: 3px; color: #7a7a7a; box-shadow: 0 1px #fff; }
.tabs > span { display: flex; align-items: center; padding: 0 16px 2px 16px; height: 30px; position: relative; }
.tabs > span::after { content: ""; width: 1px; height: 24px; background: #7a7a7a; position: absolute; right: 0; top: 3px; }
.tabs > span:last-of-type::after, .tabs > .active::after { display: none; }
.tabs > .active { background: #fff; color: #000; border: 1px solid #000; border-top: 0; margin-top: -1px; height: 30px; box-shadow: 1px 1px #a0a0a0; padding: 0 15px; }

.navbody { display: flex; height: 272px; }
.tree { flex: 1; padding-top: 1px; }
.node { height: 30px; display: flex; align-items: center; padding-left: 16px; }
.node > i { width: 30px; height: 30px; flex: none; background: linear-gradient(#888 50%, transparent 50%) 0 0 / 1px 2px repeat-y; }
.node > .tee { width: 17px; background: linear-gradient(#888 50%, transparent 50%) 0 0 / 1px 2px repeat-y, linear-gradient(90deg, #888 50%, transparent 50%) 0 15px / 2px 1px repeat-x; }
.node > .last { background: repeating-linear-gradient(#888 0 1px, transparent 1px 2px) 0 0 / 1px 16px no-repeat, linear-gradient(90deg, #888 50%, transparent 50%) 0 15px / 2px 1px repeat-x; }
.node > .plus { position: relative; }
.node > .plus::before { content: ""; position: absolute; left: -6px; top: 9px; width: 13px; height: 13px; border: 1px solid #909090; background: linear-gradient(#2a4a9c, #2a4a9c) 2px 5px / 7px 1px no-repeat, linear-gradient(#2a4a9c, #2a4a9c) 5px 2px / 1px 7px no-repeat, #f4f4f4; }
.node svg { margin: 0 6px 0 3px; }
.n1 svg { margin: 0 5px 0 4px; width: 23px; }
.gear-blue { fill: #bfe3ff; stroke: #0f66a8; }
.gear-green { fill: #cdf5cf; stroke: #10a828; }
.vscroll { width: 25px; background: #f0f0f0; display: flex; flex-direction: column; align-items: center; padding: 10px 0 8px; }
.thumb { width: 24px; height: 123px; background: #cdcdcd; margin: auto 0 9px; }

.mdi { flex: 1; display: flex; flex-direction: column; }
.mdi-windows { display: flex; height: 640px; }
.chartwin { width: 697px; border: 2px solid #696969; border-bottom-width: 1px; background: #f0f0f0; color: #787878; }
.chartwin + .chartwin { width: 694px; border-left: 0; border-right-width: 1px; }
.focus { background: #e0f0ff; color: #000; }
.chartwin header { height: 41px; display: flex; align-items: center; padding: 1px 27px 0 16px; }
.chartwin header em { margin-left: 7px; }
.chartwin .mbtns { margin: 5px 0 0 auto; color: #b0b0b0; }
.focus .mbtns { color: #000; }
.canvas { position: relative; margin-left: 7px; width: 679px; background: #000; border: solid; border-width: 2px; border-color: #8a8a8a #fff #fff #8a8a8a; }
.grid { stroke: #778899; stroke-dasharray: 6 4; fill: none; }
.quote { stroke: #778899; }
.bar { stroke: #32cd32; stroke-width: 2; }
.wick { stroke: #0f0; }
.up { stroke: #0f0; fill: #000; }
.down { stroke: #0f0; fill: #fff; }
.frame { stroke: #fff; fill: none; }
.axis, .tagtext { font: 14px "DejaVu Sans Condensed", "Noto Sans", sans-serif; fill: #fff; }
.tag { fill: #778899; }
.tagtext { fill: #000; }

/* Order panel drawn by the expert advisor over the chart */
.order { position: absolute; left: 18px; top: 37px; width: 536px; font: 24px/36px "Noto Sans CJK JP", sans-serif; color: #00ffff; }
.order-box { height: 456px; border: 2px solid #0000f0; background: #000045; padding: 9px 12px 0 13px; box-shadow: inset -2px -2px #20205c; }
.orow { height: 36px; display: flex; align-items: center; }
.orow > em { width: 289px; flex: none; white-space: nowrap; }
.orow u { font: 28px/36px "Liberation Mono", monospace; display: inline-block; transform: scaleX(.71); transform-origin: left; white-space: nowrap; padding-top: 1px; }
.field { width: 126px; height: 31px; background: #fff; border: 1px solid #000; color: #000; padding-left: 4px; display: flex; align-items: center; }
.field u { line-height: 29px; width: 100px; }
.deal { display: flex; gap: 66px; height: 54px; margin: 9px 0 11px; }
.deal button { width: 219px; height: 54px; font: 25px/50px "Noto Sans CJK JP", sans-serif; padding: 0; }
.buy { background: #ffcccc; border: 1px solid #f00; color: #f00; }
.sell { background: #ccccff; border: 1px solid #00f; color: #00f; }
.check { width: 21px; height: 21px; background: #e8e8e8; border: 1px solid #000; color: #000; font-size: 20px; line-height: 19px; text-align: center; }
.close-all { margin: 1px 0 0 3px; height: 47px; width: 533px; background: #ffdc6e; color: #f00; font-size: 28px; line-height: 44px; text-align: center; }

.mdi-tabs { display: flex; height: 32px; padding: 2px 1px 0 2px; border-bottom: 1px solid #fff; }
.mdi-tabs .active { width: 169px; height: 29px; background: #fff; border: solid #000; border-width: 0 1px 1px 0; padding: 5px 0 0 16px; line-height: 22px; box-shadow: 1px 1px #a0a0a0; }
.rest { flex: 1; border-top: 1px solid #000; display: flex; justify-content: space-between; align-items: center; padding: 4px 15px 0 18px; color: #787878; }

.toolbox { height: 99px; flex: none; display: flex; padding: 9px 6px 0 2px; border-bottom: 1px solid #a0a0a0; box-shadow: 0 1px #fff, inset 0 1px #a0a0a0; }
.toolbox-side { width: 22px; display: flex; flex-direction: column; align-items: center; justify-content: space-between; padding: 4px 0 4px; }
.toolbox-main { flex: 1; border: solid #a0a0a0; border-width: 1px 0 0 1px; height: 84px; }
.mail-head { height: 27px; background: #fff; display: grid; grid-template-columns: 933px 372px 337px 1fr 26px; }
.mail-head span { border-right: 1px solid #e0e0e0; padding: 5px 0 0 6px; line-height: 24px; height: 27px; }
.mail-head .time { border: 0; text-align: right; }
.hscroll { height: 24px; display: flex; align-items: center; background: #f0f0f0; }
.hthumb { flex: 1; height: 24px; background: #cdcdcd; }
.wide { height: 32px; padding-left: 2px; margin-top: 1px; }
.wide > span { padding: 0 15px 2px 16px; }
.wide > .active { padding: 0 15px 1px; margin-left: 0; }
.wide .active b { font: bold 14px/14px "DejaVu Sans Condensed", sans-serif; color: #f01020; margin: 12px 0 0 3px; }
.links { margin-left: auto; display: flex; align-items: center; color: #000; padding: 6px 12px 0 0; height: 31px; }
.links em { margin-left: 5px; }
.links svg:first-child + em { margin-left: 8px; }
.links em + svg { margin-left: 17px; }

.status { flex: 1; display: grid; grid-template-columns: 837px 196px 155px 110px 109px 104px 107px 103px 1fr; padding: 5px 0 0; }
.status > span { border-left: 1px solid #a0a0a0; padding-left: 5px; display: flex; align-items: center; }
.status > span:first-child { border: 0; padding-left: 2px; }
.status > span:last-child { padding-left: 8px; gap: 7px; }
.gripper { margin: auto 1px 0 auto; }

.taskbar { height: 46px; flex: none; background: #d6d6d6; display: flex; justify-content: space-between; }
.apps { display: flex; padding-left: 2px; }
.apps > span { width: 57px; height: 46px; display: flex; align-items: center; justify-content: center; padding-right: 5px; }
.apps > .sys { width: 54px; }
.apps > .view { width: 58px; padding-right: 8px; }
.apps > .run { background: linear-gradient(#00b7c3, #00b7c3) 4px 43px / 43px 3px no-repeat; }
.apps > .split { background: linear-gradient(90deg, #00b7c3 31px, #66d0d8 31px) 4px 43px / 43px 3px no-repeat; }
.apps > .current { background: linear-gradient(#00b7c3, #00b7c3) 0 43px / 55px 3px no-repeat, #efefef; width: 55px; padding: 0; margin-left: -1px; }
.ic { font-family: "DejaVu Sans Condensed", sans-serif; font-weight: 700; fill: #fff; text-anchor: middle; }
.hot { fill: #f00000; }
.tray { display: flex; align-items: center; font-size: 18px; }
.tray em:nth-of-type(1) { margin: 0 14px 0 11px; }
.tray em + svg { margin-left: 36px; }
.tray svg + svg { margin-left: 27px; }
.tray .ime { font-size: 27px; line-height: 30px; margin: 0 22px; width: 18px; }
.tray em + .notes { margin-left: 34px; }
.peek { width: 8px; height: 46px; margin-left: 30px; border-left: 1px solid #a8a8a8; }
```
FILE: fit.js
```js
// Condense or widen each label to the width of its slot.
document.querySelectorAll('[data-w]').forEach(function (el) {
  var natural = el.getBoundingClientRect().width;
  var slot = parseFloat(el.dataset.w);
  var gap = parseFloat(getComputedStyle(el).marginRight) || 0;
  el.style.flex = 'none';
  el.style.transform = 'scaleX(' + slot / natural + ')';
  el.style.marginRight = (gap + slot - natural) + 'px';
});
```
